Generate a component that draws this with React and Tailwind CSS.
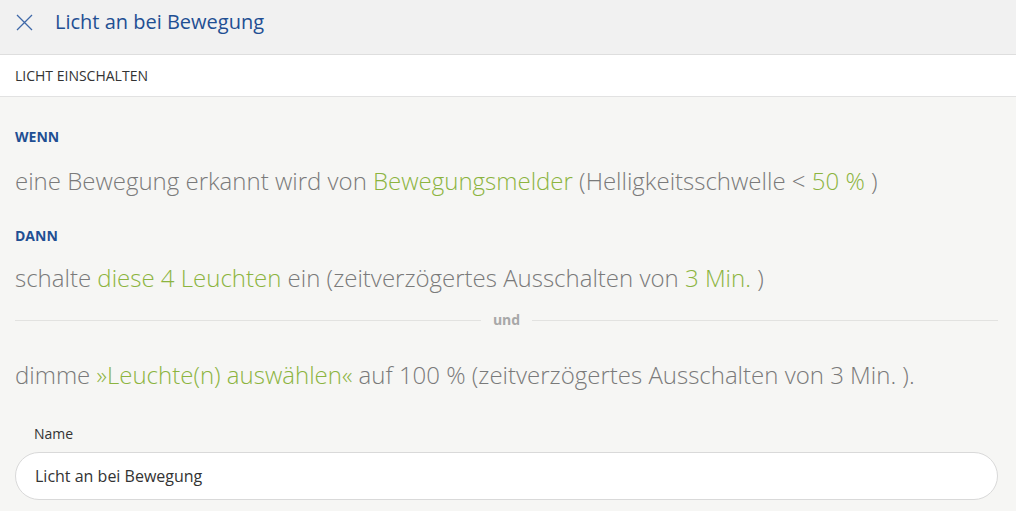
import React from "react";

const green = "text-[#8cb43f]";

const Rule = () => {
  return (
    <div className="min-h-screen bg-[#f6f6f4] font-['Open_Sans',sans-serif] text-[#7a7a7a]">
      <div className="flex h-[55px] items-center border-b border-[#dedede] bg-[#f1f1f1] pb-[10px] pl-[16px]">
        <svg width="17" height="17" viewBox="0 0 17 17" className="mr-[22px] text-[#3f68a8]">
          <path d="M1 1L16 16M16 1L1 16" stroke="currentColor" strokeWidth="1.3" fill="none" />
        </svg>
        <h1 className="text-[20px] leading-none text-[#1f4f93]">Licht an bei Bewegung</h1>
      </div>

      <div className="flex h-[42px] items-center border-b border-[#e2e2e2] bg-white px-[15px] text-[14px] text-[#333]">
        LICHT EINSCHALTEN
      </div>

      <div className="pl-[15px] pr-[18px] pt-[30px]">
        <div className="text-[14px] font-bold leading-[20px] text-[#1f4f93]">WENN</div>
        <p className="mt-[18px] text-[24px] font-light leading-[32px]">
          eine Bewegung erkannt wird von <span className={green}>Bewegungsmelder</span> (Helligkeitsschwelle &lt;{" "}
          <span className={green}>50 %</span> )
        </p>

        <div className="mt-[29px] text-[14px] font-bold leading-[20px] text-[#1f4f93]">DANN</div>
        <p className="mt-[16px] text-[24px] font-light leading-[32px]">
          schalte <span className={green}>diese 4 Leuchten</span> ein (zeitverzögertes Ausschalten von{" "}
          <span className={green}>3 Min.</span> )
        </p>

        <div className="mt-[16px] flex items-center gap-[12px]">
          <div className="h-px flex-1 bg-[#e2e2e0]" />
          <span className="text-[14px] font-bold leading-[20px] text-[#a8a8a8]">und</span>
          <div className="h-px flex-1 bg-[#e2e2e0]" />
        </div>

        <p className="mt-[29px] text-[24px] font-light leading-[32px]">
          dimme <span className={green}>»Leuchte(n) auswählen«</span> auf 100 % (zeitverzögertes Ausschalten von 3 Min. ).
        </p>

        <label className="mt-[33px] block pl-[19px] text-[14px] leading-[20px] text-[#333]">Name</label>
        <div className="mt-[8px] flex h-[48px] items-center rounded-full border border-[#d9d9d9] bg-white px-[19px] text-[16px] text-[#333]">
          Licht an bei Bewegung
        </div>
      </div>
    </div>
  );
};

export default Rule;
